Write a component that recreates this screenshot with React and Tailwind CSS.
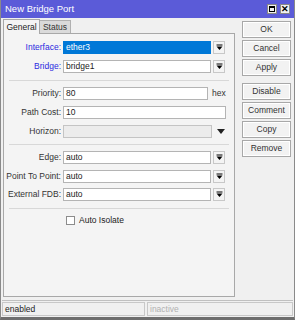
import React from "react";

const font = { fontFamily: '"Liberation Sans", Arial, sans-serif' };

function DropBtn() {
  return (
    <div className="ml-[2px] flex h-[13px] w-[12px] items-center justify-center border border-[#c8c8c8] bg-[#f4f4f4]">
      <svg width="7" height="7" viewBox="0 0 7 7">
        <rect x="0.5" y="0.5" width="6" height="1" fill="#000" />
        <path d="M0.5 2.5 L6.5 2.5 L3.5 6 Z" fill="#000" />
      </svg>
    </div>
  );
}

function Row({ label, blue, children, className = "" }) {
  return (
    <div className={"flex h-[13px] items-center " + className}>
      <div
        className={
          "w-[59px] pr-[2px] text-right text-[8.5px] leading-none " +
          (blue ? "text-[#2a2ae0]" : "text-[#333]")
        }
      >
        {label}
      </div>
      {children}
    </div>
  );
}

function Field({ value, w = "w-[148px]", selected }) {
  return (
    <div
      className={
        "flex h-[13px] items-center border px-[2px] text-[8.5px] leading-none " +
        w +
        (selected
          ? " border-[#0078d7] bg-[#0078d7] text-white"
          : " border-[#b4b4b4] bg-white text-[#222]")
      }
    >
      {value}
    </div>
  );
}

function Sep({ className = "" }) {
  return <div className={"ml-[5px] mr-[5px] h-px bg-[#d8d8d8] " + className} />;
}

function Btn({ children, className = "" }) {
  return (
    <div
      className={
        "flex h-[17px] w-[49px] items-center justify-center border border-[#a8a8a8] bg-[#f2f2f2] text-[8.5px] text-[#333] shadow-[inset_0_0_0_1px_#ffffff] " +
        className
      }
    >
      {children}
    </div>
  );
}

export default function App() {
  return (
    <div
      className="flex h-[320px] w-[295px] flex-col overflow-hidden border-x border-b-[3px] border-x-[#8a8a8a] border-b-[#6e6e6e] bg-[#f0f0f0]"
      style={font}
    >
      {/* title bar */}
      <div className="flex h-[18px] shrink-0 items-center bg-[#5b5bd8] pl-[4px] pr-[4px]">
        <div className="flex-1 text-[9.5px] text-white">New Bridge Port</div>
        <div className="mr-[3px] flex h-[10px] w-[10px] items-center justify-center border border-[#888] bg-[#f0f0f0]">
          <div className="h-[6px] w-[6px] border border-black border-t-2" />
        </div>
        <div className="flex h-[10px] w-[10px] items-center justify-center border border-[#888] bg-[#f0f0f0] text-[9px] font-bold leading-none text-black">
          ✕
        </div>
      </div>

      <div className="flex flex-1">
        {/* left: tabs + panel */}
        <div className="ml-[2px] flex w-[232px] flex-col">
          <div className="mt-[1px] flex h-[14px] items-end">
            <div className="relative z-10 -mb-px flex h-[15px] w-[37px] items-center justify-center border border-b-0 border-[#a8a8a8] bg-[#f4f4f4] text-[8.5px] text-[#222]">
              General
            </div>
            <div className="flex h-[13px] w-[31px] items-center justify-center border border-l-0 border-b-0 border-[#b0b0b0] bg-[#dadada] text-[8.5px] text-[#333]">
              Status
            </div>
          </div>
          <div className="flex h-[264px] flex-col border border-[#a8a8a8] bg-[#f4f4f4] pt-[7px]">
            <Row label="Interface:" blue>
              <Field value="ether3" selected />
              <DropBtn />
            </Row>
            <Row label="Bridge:" blue className="mt-[6px]">
              <Field value="bridge1" />
              <DropBtn />
            </Row>
            <Sep className="mt-[7px]" />
            <Row label="Priority:" className="mt-[6px]">
              <Field value="80" w="w-[145px]" />
              <span className="ml-[4px] text-[8.5px] text-[#333]">hex</span>
            </Row>
            <Row label="Path Cost:" className="mt-[6px]">
              <Field value="10" w="w-[163px]" />
            </Row>
            <Row label="Horizon:" className="mt-[6px]">
              <div className="h-[13px] w-[149px] border border-[#c4c4c4] bg-[#ececec]" />
              <svg width="8" height="5" viewBox="0 0 8 5" className="ml-[5px]">
                <path d="M0 0 L8 0 L4 5 Z" fill="#222" />
              </svg>
            </Row>
            <Sep className="mt-[6px]" />
            <Row label="Edge:" className="mt-[6px]">
              <Field value="auto" />
              <DropBtn />
            </Row>
            <Row label="Point To Point:" className="mt-[6px]">
              <Field value="auto" />
              <DropBtn />
            </Row>
            <Row label="External FDB:" className="mt-[5px]">
              <Field value="auto" />
              <DropBtn />
            </Row>
            <Sep className="mt-[7px]" />
            <div className="ml-[62px] mt-[5px] flex items-center">
              <div className="h-[9px] w-[9px] border border-[#8c8c8c] bg-white" />
              <span className="ml-[4px] text-[8.5px] text-[#222]">Auto Isolate</span>
            </div>
          </div>
        </div>

        {/* right: buttons */}
        <div className="ml-[7px] mt-[3px] flex flex-col">
          <Btn>OK</Btn>
          <Btn className="mt-[2px]">Cancel</Btn>
          <Btn className="mt-[2px]">Apply</Btn>
          <Btn className="mt-[7px]">Disable</Btn>
          <Btn className="mt-[2px]">Comment</Btn>
          <Btn className="mt-[2px]">Copy</Btn>
          <Btn className="mt-[2px]">Remove</Btn>
        </div>
      </div>

      {/* status bar */}
      <div className="mx-[1px] mb-[1px] flex h-[16px] shrink-0 border-t border-[#c0c0c0] pt-[1px]">
        <div className="flex w-[143px] items-center border border-[#c8c8c8] px-[2px] text-[8.5px] text-[#222]">
          enabled
        </div>
        <div className="ml-[2px] flex flex-1 items-center border border-[#c8c8c8] px-[2px] text-[8.5px] text-[#b0b0b0]">
          inactive
        </div>
      </div>
    </div>
  );
}
